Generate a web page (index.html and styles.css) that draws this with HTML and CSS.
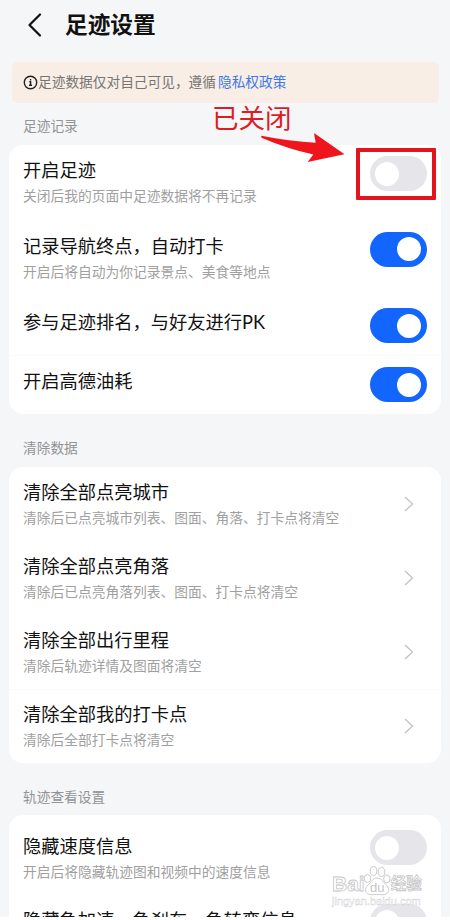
FILE: index.html
```html
<!DOCTYPE html>
<html lang="zh-CN">
<head>
    <meta charset="UTF-8">
    <meta name="viewport" content="width=device-width, initial-scale=1.0">
    <title>足迹设置</title>
    <link rel="stylesheet" href="styles.css">
</head>
<body>

<div class="screen">
    <!-- 顶部 -->
    <header class="header">
        <svg class="back" width="16" height="26" viewBox="0 0 16 26"><path d="M14 2.5 3.5 13 14 23.5"/></svg>
        <h1>足迹设置</h1>
    </header>

    <!-- 隐私提示 -->
    <div class="notice">
        <svg class="info" width="15" height="15" viewBox="0 0 15 15"><circle cx="7.5" cy="7.5" r="6.2"/><path d="M6.3 6.8h1.3v3.2M6 10.3h3M6.9 4.7h1.3"/></svg>
        <span>足迹数据仅对自己可见，遵循</span>
        <a class="link">隐私权政策</a>
    </div>

    <!-- 足迹记录 -->
    <h2 class="label">足迹记录</h2>
    <section class="card">
        <div class="row tall">
            <div class="text">
                <div class="title">开启足迹</div>
                <div class="desc">关闭后我的页面中足迹数据将不再记录</div>
            </div>
            <div class="switch"></div>
        </div>
        <div class="row tall">
            <div class="text">
                <div class="title">记录导航终点，自动打卡</div>
                <div class="desc">开启后将自动为你记录景点、美食等地点</div>
            </div>
            <div class="switch on"></div>
        </div>
        <div class="row short">
            <div class="title">参与足迹排名，与好友进行<span class="latin">PK</span></div>
            <div class="switch on"></div>
        </div>
        <div class="row short line">
            <div class="title">开启高德油耗</div>
            <div class="switch on"></div>
        </div>
    </section>

    <!-- 清除数据 -->
    <h2 class="label label-clear">清除数据</h2>
    <section class="card">
        <div class="row">
            <div class="text">
                <div class="title">清除全部点亮城市</div>
                <div class="desc">清除后已点亮城市列表、图面、角落、打卡点将清空</div>
            </div>
            <svg class="arrow" width="10" height="16" viewBox="0 0 10 16"><path d="M1 1l7.5 7L1 15"/></svg>
        </div>
        <div class="row">
            <div class="text">
                <div class="title">清除全部点亮角落</div>
                <div class="desc">清除后已点亮角落列表、图面、打卡点将清空</div>
            </div>
            <svg class="arrow" width="10" height="16" viewBox="0 0 10 16"><path d="M1 1l7.5 7L1 15"/></svg>
        </div>
        <div class="row">
            <div class="text">
                <div class="title">清除全部出行里程</div>
                <div class="desc">清除后轨迹详情及图面将清空</div>
            </div>
            <svg class="arrow" width="10" height="16" viewBox="0 0 10 16"><path d="M1 1l7.5 7L1 15"/></svg>
        </div>
        <div class="row line">
            <div class="text">
                <div class="title">清除全部我的打卡点</div>
                <div class="desc">清除后全部打卡点将清空</div>
            </div>
            <svg class="arrow" width="10" height="16" viewBox="0 0 10 16"><path d="M1 1l7.5 7L1 15"/></svg>
        </div>
    </section>

    <!-- 轨迹查看设置 -->
    <h2 class="label label-track">轨迹查看设置</h2>
    <section class="card card-track">
        <div class="row">
            <div class="text">
                <div class="title">隐藏速度信息</div>
                <div class="desc">开启后将隐藏轨迹图和视频中的速度信息</div>
            </div>
            <div class="switch"></div>
        </div>
        <div class="row">
            <div class="text">
                <div class="title">隐藏急加速、急刹车、急转弯信息</div>
            </div>
            <div class="switch"></div>
        </div>
    </section>

    <!-- 标注 -->
    <div class="mark-text">已关闭</div>
    <svg class="mark-arrow" width="86" height="32" viewBox="0 0 86 32"><path d="M1.5 4.7Q.5 6 2 7Q28 18 53.3 23.5L47.7 31 84.5 23.3 54 2l1.7 9.7Q30 10.500 1.500 4.700z"/></svg>
    <div class="mark-box"></div>

    <!-- 水印 -->
    <div class="watermark">
        <div class="brand">
            <span>Bai</span>
            <svg width="28" height="30" viewBox="0 0 28 30">
                <ellipse cx="4.500" cy="12.500" rx="3.200" ry="4"/>
                <ellipse cx="10.500" cy="5" rx="3.300" ry="4.500"/>
                <ellipse cx="18.500" cy="6" rx="3.300" ry="4.500"/>
                <ellipse cx="23.800" cy="13" rx="3.200" ry="4"/>
                <path d="M14 12C9.500 12 9 16 5 19 1 22.500 2 28.700 8 28.700c4 0 8-.6 11 0 6.500.5 8.500-5 5-9C20 16.500 19 12 14 12z"/>
                <text x="7" y="26">du</text>
            </svg>
            <span class="brand-cn">经验</span>
        </div>
        <div class="site">jingyan.baidu.com</div>
    </div>
</div>

</body>
</html>
```
FILE: styles.css
```css
body {
    margin: 0;
    background-color: #fff;
    font-family: "Noto Sans CJK SC", sans-serif;
    color: #111;
}

.screen {
    position: relative;
    width: 450px;
    height: 917px;
    overflow: hidden;
    background-color: #f5f6f8;
}

.header {
    display: flex;
    align-items: center;
    height: 49px;
    padding-left: 26px;
    margin-bottom: 13px;
}

.back {
    fill: none;
    stroke: #111;
    stroke-width: 2.2;
    stroke-linecap: round;
    stroke-linejoin: round;
}

.header h1 {
    margin: 0 0 1px 23px;
    font-size: 22.7px;
    font-weight: 700;
    line-height: 30px;
}

.notice {
    display: flex;
    align-items: center;
    box-sizing: border-box;
    height: 41px;
    margin: 0 11px 0 12px;
    padding: 0 0 3px 11px;
    border-radius: 5px;
    background-color: #f8eee6;
    font-size: 13.7px;
    color: #777472;
}

.info {
    margin-top: 2px;
    fill: none;
    stroke: #222;
    stroke-width: 1.4;
}

.link {
    margin-left: 2px;
    color: #3c78e6;
}

.label {
    margin: 12px 0 10px 23px;
    font-size: 13.7px;
    font-weight: 400;
    line-height: 20px;
    color: #929395;
}

.label-clear {
    margin: 23px 0 10px 23px;
}

.label-track {
    margin: 23px 0 9px 23px;
}

.card {
    margin: 0 9px;
    border-radius: 14px;
    background-color: #fff;
}

.card-track {
    padding-top: 6px;
}

.row {
    display: flex;
    justify-content: space-between;
    align-items: flex-start;
    box-sizing: border-box;
    height: 74px;
    padding: 12px 14px 0;
}

.tall {
    height: 75.5px;
}

.short {
    height: 59px;
    padding-top: 13px;
}

.title {
    font-size: 18.25px;
    line-height: 25px;
    white-space: nowrap;
}

.latin {
    font-family: Lato, sans-serif;
}

.line {
    box-shadow: inset 0 1px #fbfbfb;
}

.desc {
    margin-top: 2px;
    font-size: 13.75px;
    line-height: 22px;
    color: #a0a0a0;
    white-space: nowrap;
}

.switch {
    flex: none;
    box-sizing: border-box;
    width: 57px;
    height: 35px;
    padding: 5.5px;
    border-radius: 18px;
    background-color: #e5e5ea;
}

.short .switch {
    margin-top: -1px;
}

.tall .switch {
    margin-top: -1px;
}

.card-track .switch {
    margin-top: -3px;
}

.switch::before {
    content: "";
    display: block;
    width: 24px;
    height: 24px;
    margin-left: -0.5px;
    border-radius: 50%;
    background-color: #fff;
}

.switch.on {
    background-color: #1266fe;
}

.switch.on::before {
    margin-left: 21.5px;
}

.arrow {
    margin: 17px 13px 0 0;
    fill: none;
    stroke: #c2c2c2;
    stroke-width: 1.3;
}

/* 标注和水印 */
.mark-text {
    position: absolute;
    left: 212px;
    top: 98px;
    font-size: 26.5px;
    line-height: 38px;
    color: #e01b24;
}

.mark-arrow {
    position: absolute;
    left: 260px;
    top: 131px;
    fill: #ef151d;
}

.mark-box {
    position: absolute;
    left: 356px;
    top: 148px;
    box-sizing: border-box;
    width: 80px;
    height: 52px;
    border: 4px solid #e3141e;
    border-radius: 1px;
}

.watermark {
    position: absolute;
    left: 332px;
    top: 866px;
    width: 92px;
    font-family: "Liberation Sans", "Noto Sans CJK SC", sans-serif;
    color: #fff;
}

.brand {
    display: flex;
    align-items: flex-end;
    height: 30px;
    font-size: 21px;
    font-weight: 700;
    line-height: 25px;
    -webkit-text-stroke: 0.8px #c6c6c8;
}

.brand svg {
    flex: none;
    margin-left: -2px;
    fill: #fff;
    stroke: #c6c6c8;
    stroke-width: 0.9;
}

.brand text {
    font-size: 13px;
    font-weight: 400;
    fill: #c6c6c8;
    stroke: none;
    -webkit-text-stroke: 0;
}

.brand-cn {
    font-size: 15.5px;
    white-space: nowrap;
}

.site {
    margin-top: -1px;
    font-size: 11px;
    line-height: 13px;
    -webkit-text-stroke: 0.4px #d0d0d2;
}
```
